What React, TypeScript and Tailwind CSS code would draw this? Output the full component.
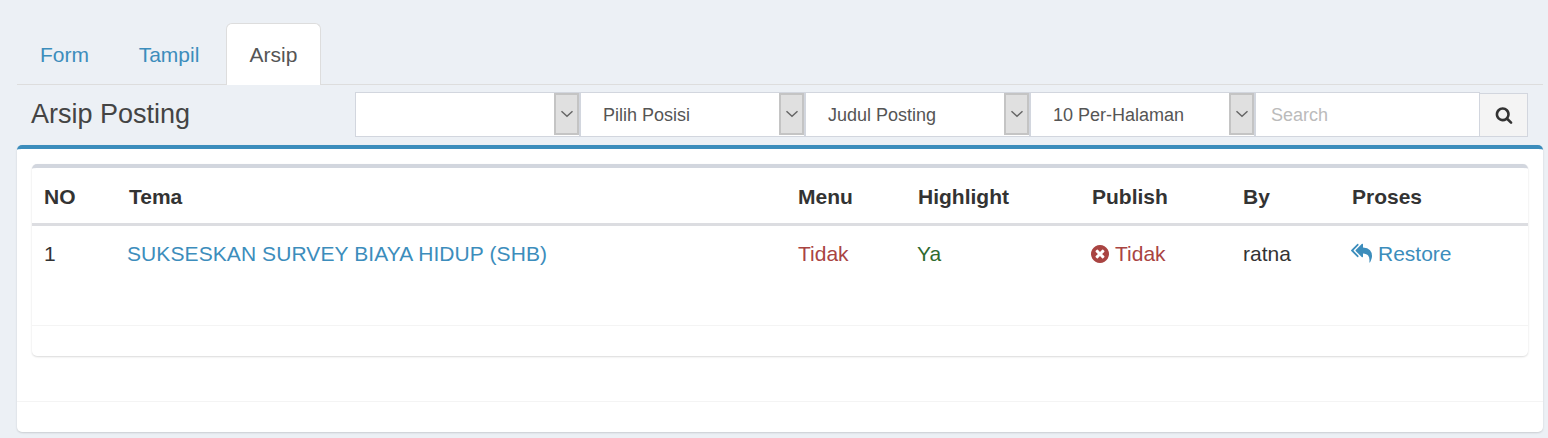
import React from "react";

function SelectBox({ label }: { label: string }) {
  return (
    <div className="flex h-[45px] w-[225px] items-stretch border border-[#d2d6de] bg-white">
      <div className="flex-1 truncate pl-[22px] text-[18px] leading-[45px] text-[#555]">
        {label}
      </div>
      <div className="mb-px flex w-[25px] items-center justify-center border-2 border-[#c4c4c4] bg-[#e0e0e0]">
        <svg width="14" height="8" viewBox="0 0 14 8" fill="none">
          <path d="M1.5 1.2 7 6.2l5.5-5" stroke="#666" strokeWidth="1.5" />
        </svg>
      </div>
    </div>
  );
}

function SearchIcon() {
  return (
    <svg width="18" height="18" viewBox="0 0 1792 1792" fill="currentColor">
      <path d="M1216 832q0-185-131.5-316.5t-316.5-131.5-316.5 131.5-131.5 316.5 131.5 316.5 316.5 131.5 316.5-131.5 131.5-316.5zm512 832q0 52-38 90t-90 38q-54 0-90-38l-343-342q-179 124-399 124-143 0-273.5-55.5t-225-150-150-225-55.5-273.5 55.5-273.5 150-225 225-150 273.5-55.5 273.5 55.5 225 150 150 225 55.5 273.5q0 220-124 399l343 343q37 37 37 90z" />
    </svg>
  );
}

function TimesCircleIcon() {
  return (
    <svg width="18" height="18" viewBox="128 128 1536 1536" fill="currentColor">
      <path d="M1277 1122q0-26-19-45l-181-181 181-181q19-19 19-45 0-27-19-46l-90-90q-19-19-46-19-26 0-45 19l-181 181-181-181q-19-19-45-19-27 0-46 19l-90 90q-19 19-19 46 0 26 19 45l181 181-181 181q-19 19-19 45 0 27 19 46l90 90q19 19 46 19 26 0 45-19l181-181 181 181q19 19 45 19 27 0 46-19l90-90q19-19 19-46zm387-226q0 209-103 385.5t-279.5 279.5-385.5 103-385.5-103-279.5-279.5-103-385.5 103-385.5 279.5-279.5 385.5-103 385.5 103 279.5 279.5 103 385.5z" />
    </svg>
  );
}

function ReplyAllIcon() {
  return (
    <svg width="21" height="21" viewBox="0 0 1792 1792" fill="currentColor">
      <path d="M640 1082v70q0 42-39 59-13 5-25 5-27 0-45-19l-512-512q-19-19-19-45t19-45l512-512q18-19 45-19 12 0 25 5 39 17 39 59v69l-397 398q-19 19-19 45t19 45zm1152 38q0 58-17 133.5t-38.5 138-48 125-40.5 90.5l-20 40q-8 17-28 17-6 0-9-1-25-8-23-34 43-400-106-565-64-71-170.5-110.5t-267.5-52.5v251q0 42-39 59-13 5-25 5-27 0-45-19l-512-512q-19-19-19-45t19-45l512-512q18-19 45-19 12 0 25 5 39 17 39 59v262q411 28 599 221 169 173 169 509z" />
    </svg>
  );
}

export default function App() {
  return (
    <div className="h-[438px] overflow-hidden bg-[#ecf0f5] pt-[23px] pr-[5px] pl-[17px] font-['Liberation_Sans',Arial,sans-serif] text-[21px] text-[#333]">
      <div className="flex h-[62px] border-b border-[#ddd]">
        <a className="flex h-[61px] w-[97px] items-center justify-center pt-[2px] pr-[2px] text-[#3c8dbc]">Form</a>
        <a className="flex h-[61px] w-[112px] items-center justify-center pt-[2px] pr-[2px] text-[#3c8dbc]">Tampil</a>
        <a className="flex h-[62px] w-[95px] items-center justify-center rounded-t-[6px] border border-b-0 border-[#ddd] bg-white text-[#555]">
          Arsip
        </a>
      </div>

      <div className="flex h-[60px] items-start justify-between pt-[7px] pr-[15px]">
        <h1 className="pt-px pl-[14px] text-[27px] leading-[42px] text-[#444]">Arsip Posting</h1>
        <div className="flex">
          <SelectBox label="" />
          <SelectBox label="Pilih Posisi" />
          <SelectBox label="Judul Posting" />
          <SelectBox label="10 Per-Halaman" />
          <div className="flex h-[45px] w-[225px] items-center border border-[#d2d6de] bg-white pt-px pl-[15px] text-[18px] text-[#bbb]">
            Search
          </div>
          <div className="mt-px flex h-[44px] w-[48px] items-center justify-center border border-l-0 border-[#d2d6de] bg-[#f4f4f4] text-[#333]">
            <SearchIcon />
          </div>
        </div>
      </div>

      <div className="h-[287px] rounded-[5px] border-t-[4px] border-[#3c8dbc] bg-white shadow-[0_1px_2px_rgba(0,0,0,0.15)]">
        <div className="h-[252px] px-[15px] pt-[15px]">
          <div className="h-[192px] rounded-[5px] border-t-[4px] border-[#d2d6de] bg-white shadow-[0_1px_2px_rgba(0,0,0,0.15)]">
            <table className="w-full table-fixed border-collapse text-left">
              <thead>
                <tr className="h-[56px] border-b-[3px] border-[#dcdde1] font-bold">
                  <th className="w-[85px] pt-[2px] pl-[12px]">NO</th>
                  <th className="w-[670px] pt-[2px] pl-[12px]">Tema</th>
                  <th className="w-[119px] pt-[2px] pl-[11px]">Menu</th>
                  <th className="w-[174px] pt-[2px] pl-[12px]">Highlight</th>
                  <th className="w-[151px] pt-[2px] pl-[12px]">Publish</th>
                  <th className="w-[109px] pt-[2px] pl-[12px]">By</th>
                  <th className="pt-[2px] pl-[12px]">Proses</th>
                </tr>
              </thead>
              <tbody>
                <tr className="h-[58px]">
                  <td className="pl-[12px]">1</td>
                  <td className="pl-[10px] tracking-[0.09px] text-[#3c8dbc]">SUKSESKAN SURVEY BIAYA HIDUP (SHB)</td>
                  <td className="pl-[11px] text-[#a94442]">Tidak</td>
                  <td className="pl-[11px] text-[#2f6b2f]">Ya</td>
                  <td className="pl-[11px] text-[#a94442]">
                    <span className="flex items-center gap-[6px]">
                      <TimesCircleIcon />
                      Tidak
                    </span>
                  </td>
                  <td className="pl-[12px]">ratna</td>
                  <td className="pl-[11px] text-[#3c8dbc]">
                    <span className="flex items-center gap-[6px]">
                      <ReplyAllIcon />
                      Restore
                    </span>
                  </td>
                </tr>
              </tbody>
            </table>
            <div className="mt-[43px] border-t border-[#f4f4f4]" />
          </div>
        </div>
        <div className="border-t border-[#f4f4f4]" />
      </div>
    </div>
  );
}
